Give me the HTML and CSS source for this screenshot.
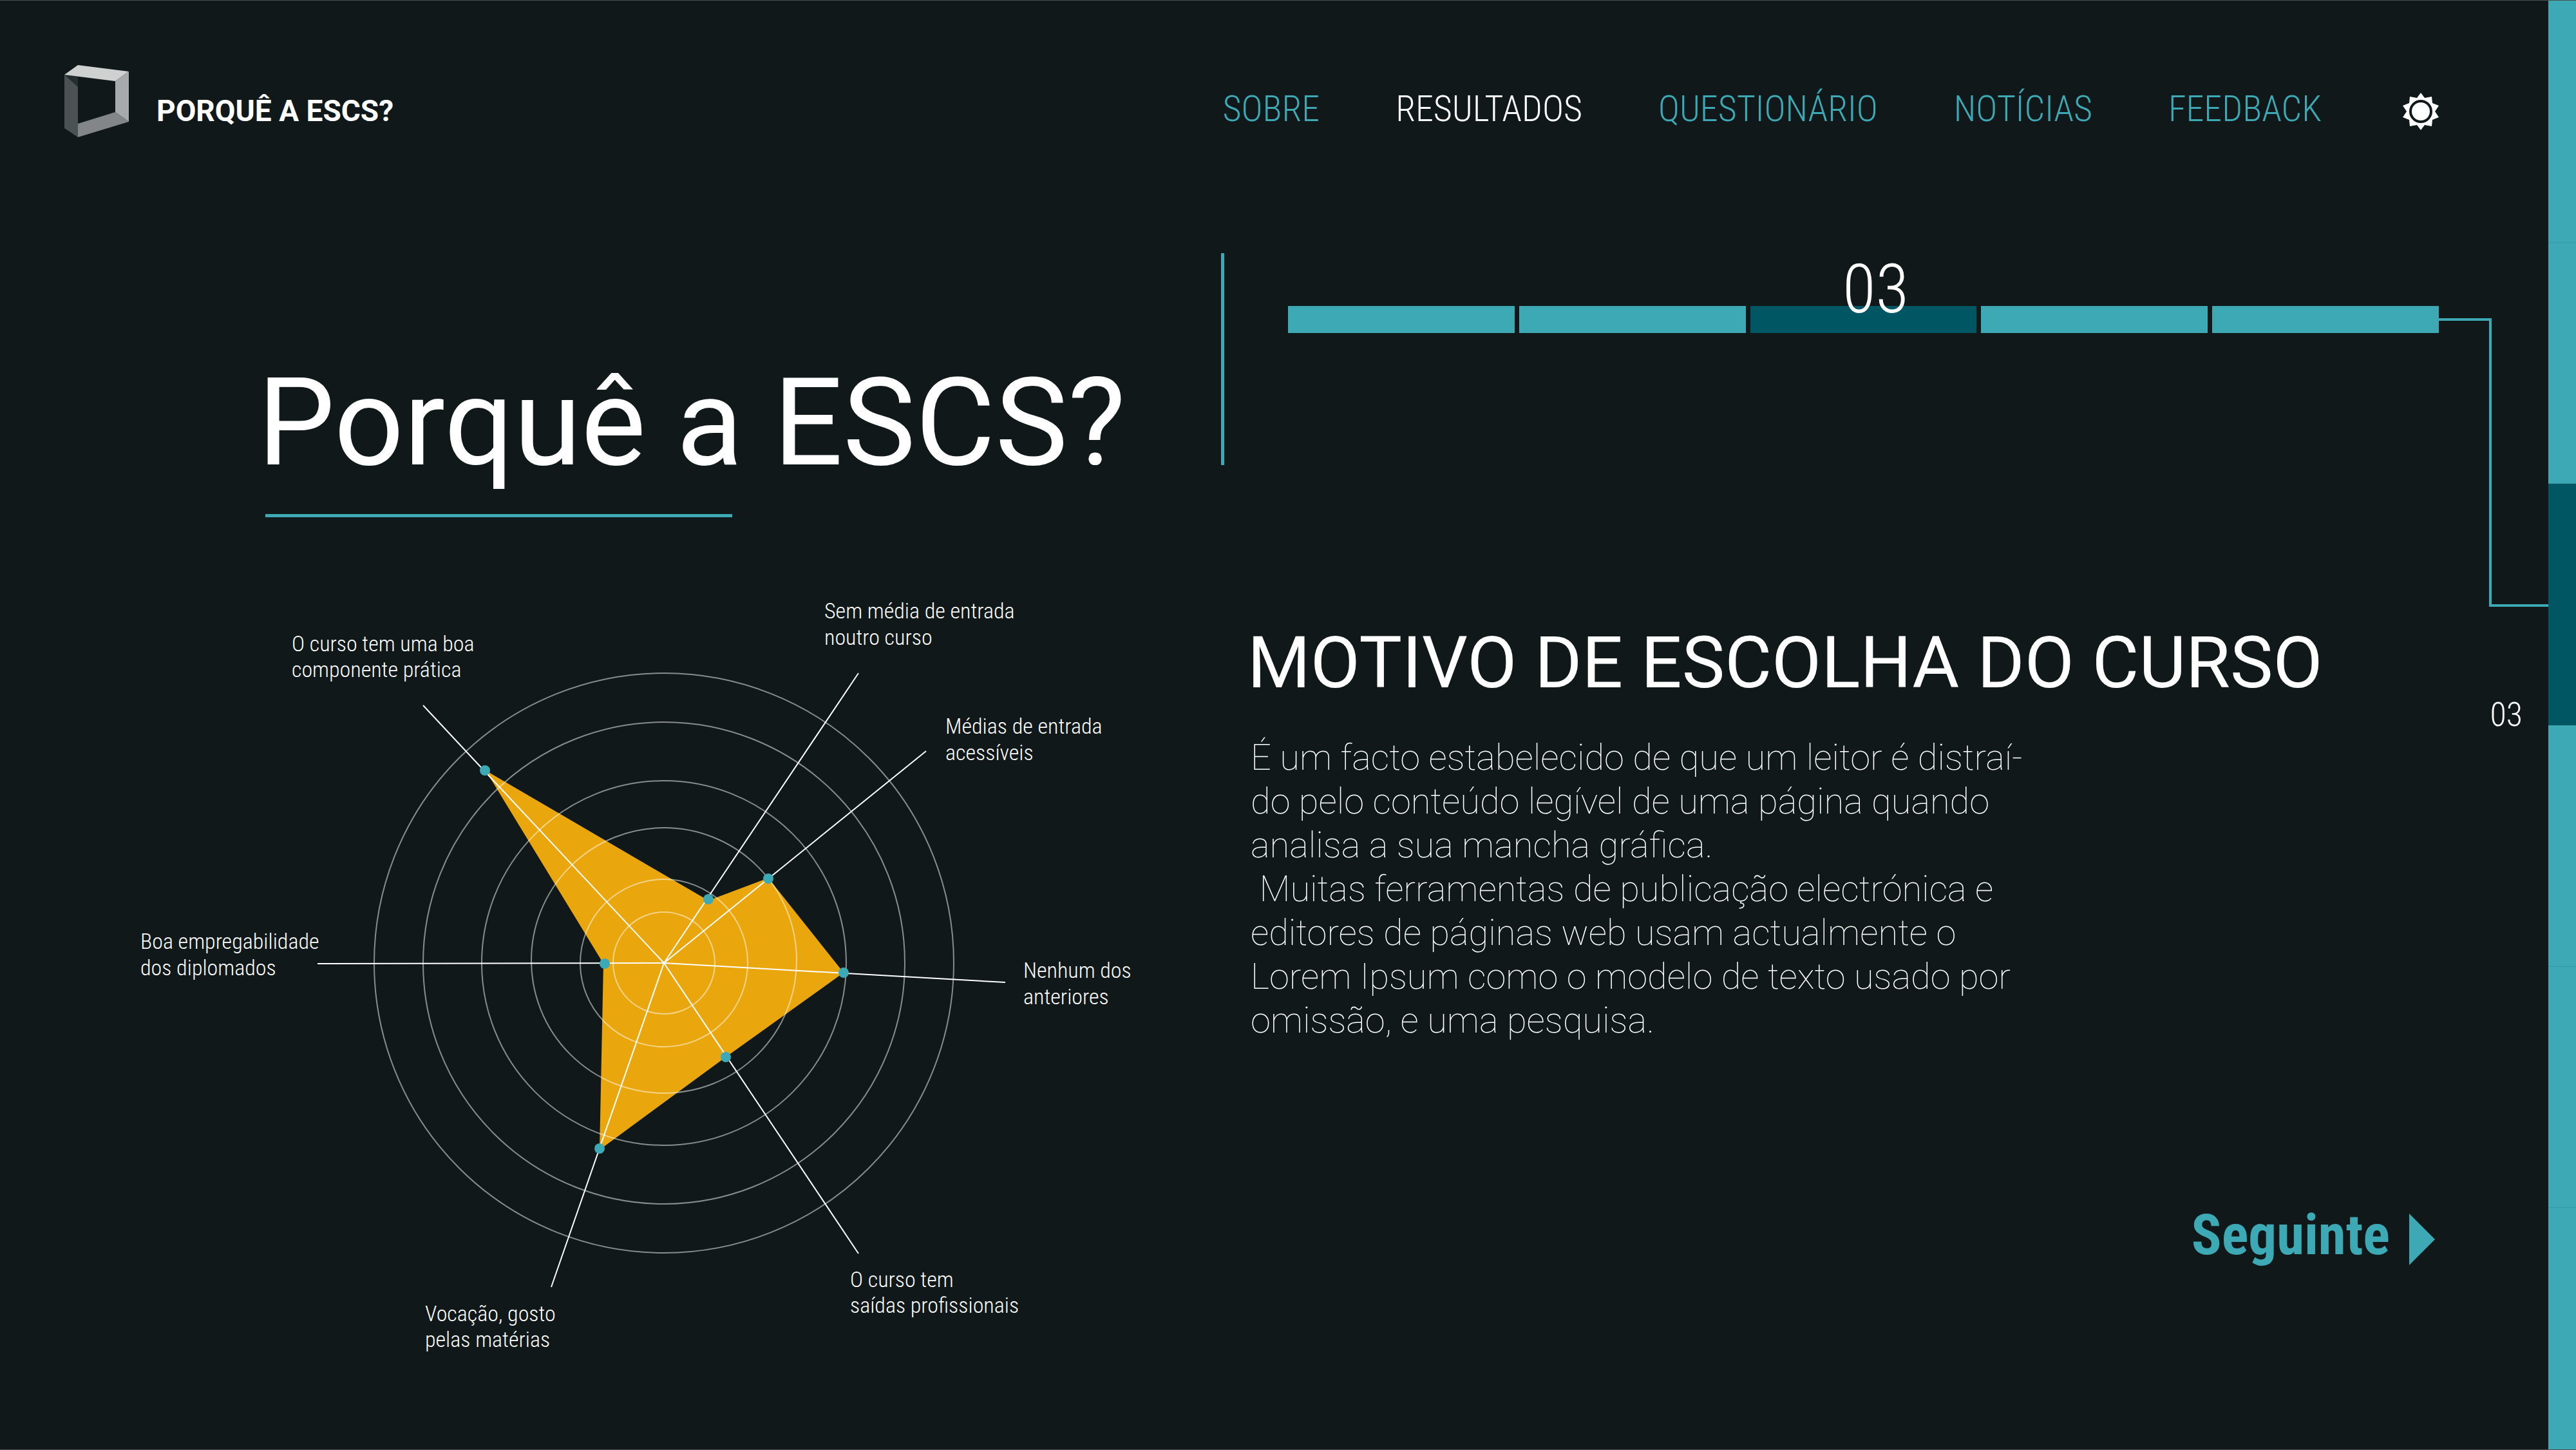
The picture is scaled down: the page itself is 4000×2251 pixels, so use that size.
FILE: index.html
```html
<!DOCTYPE html>
<html lang="pt">
<head>
<meta charset="utf-8">
<meta name="viewport" content="width=device-width, initial-scale=1">
<title>Porquê a ESCS?</title>
<link rel="stylesheet" href="styles.css">
</head>
<body>
<div class="page">
  <div class="body">
    <header class="header">
      <a class="brand" href="#">
        <svg class="brand-logo" viewBox="0 0 100 112" aria-hidden="true">
          <path fill="#262f30" d="M0 15L21 18V34Z"/>
          <path fill="#4c5252" d="M0 15L21 34V112L0 98Z"/>
          <path fill="#cfd1d1" d="M21 0L100 10L79 25L0 15Z"/>
          <path fill="#a7aaab" d="M100 10V88L79 73V25Z"/>
          <path fill="#838687" d="M21 91L79 73L100 88L21 112Z"/>
        </svg>
        <span class="brand-name">PORQUÊ A ESCS?</span>
      </a>
      <nav class="menu" aria-label="Principal">
        <a href="#sobre">SOBRE</a>
        <a class="active" href="#resultados" aria-current="page">RESULTADOS</a>
        <a href="#questionario">QUESTIONÁRIO</a>
        <a href="#noticias">NOTÍCIAS</a>
        <a href="#feedback">FEEDBACK</a>
        <button class="theme" type="button" aria-label="Mudar tema">
          <svg viewBox="-30 -30 60 60" aria-hidden="true">
            <path fill="#fff" d="M0-29L6-21L17-23L18-13L28-9L22 0L28 9L18 13L17 23L6 21L0 29L-6 21L-17 23L-18 13L-28 9L-22 0L-28-9L-18-13L-17-23L-6-21Z"/>
            <circle r="16" fill="#fff" stroke="#101819" stroke-width="4"/>
          </svg>
        </button>
      </nav>
    </header>

    <main class="content">
      <section class="overview">
        <h1>Porquê a ESCS?</h1>
        <hr class="rule">
        <svg class="radar" viewBox="200 900 1696 1230" role="img" aria-label="Motivo de escolha do curso">
          <polygon class="area" points="754,1196 1100,1398 1193,1363 1310,1510 1127,1641 931,1785 937,1496"/>
          <g class="rings">
            <circle cx="1031" cy="1495" r="79"/>
            <circle cx="1031" cy="1495" r="130"/>
            <circle cx="1031" cy="1491" r="206"/>
            <circle cx="1031" cy="1495" r="283"/>
            <circle cx="1031" cy="1495" r="374"/>
            <circle cx="1031" cy="1495" r="450"/>
          </g>
          <path class="axes" d="M1031 1495L657 1095M1031 1495L1333 1045M1031 1495L1438 1166M1031 1495L1561 1525M1031 1495L1333 1946M1031 1495L856 1998M1031 1495L493 1496"/>
          <g class="dots">
            <circle cx="753" cy="1196" r="8"/>
            <circle cx="1100" cy="1396" r="8"/>
            <circle cx="1193" cy="1364" r="8"/>
            <circle cx="1310" cy="1510" r="8"/>
            <circle cx="1127" cy="1641" r="8"/>
            <circle cx="931" cy="1783" r="8"/>
            <circle cx="939" cy="1496" r="8"/>
          </g>
          <g class="labels">
            <text y="1011"><tspan x="453">O curso tem uma boa</tspan><tspan x="453" dy="40">componente prática</tspan></text>
            <text y="960"><tspan x="1280">Sem média de entrada</tspan><tspan x="1280" dy="41">noutro curso</tspan></text>
            <text y="1139"><tspan x="1468">Médias de entrada</tspan><tspan x="1468" dy="41">acessíveis</tspan></text>
            <text y="1518"><tspan x="1589">Nenhum dos</tspan><tspan x="1589" dy="41">anteriores</tspan></text>
            <text y="1998"><tspan x="1320">O curso tem</tspan><tspan x="1320" dy="40">saídas profissionais</tspan></text>
            <text y="2051"><tspan x="660">Vocação, gosto</tspan><tspan x="660" dy="40">pelas matérias</tspan></text>
            <text y="1473"><tspan x="218">Boa empregabilidade</tspan><tspan x="218" dy="41">dos diplomados</tspan></text>
          </g>
        </svg>
      </section>

      <section class="detail">
        <div class="progress">
          <div class="divider"></div>
          <ol class="steps">
            <li></li>
            <li></li>
            <li class="current"><span>03</span></li>
            <li></li>
            <li></li>
          </ol>
          <div class="connector"><i class="down"></i><i class="out"></i></div>
        </div>
        <h2>MOTIVO DE ESCOLHA DO CURSO</h2>
        <p>É um facto estabelecido de que um leitor é distraí-<br>do pelo conteúdo legível de uma página quando<br>analisa a sua mancha gráfica.<br>&nbsp;Muitas ferramentas de publicação electrónica e<br>editores de páginas web usam actualmente o<br>Lorem Ipsum como o modelo de texto usado por<br>omissão, e uma pesquisa.</p>
        <a class="next" href="#seguinte">Seguinte
          <svg viewBox="0 0 40 80" aria-hidden="true"><path fill="currentColor" d="M0 0L40 40L0 80Z"/></svg>
        </a>
      </section>
    </main>
  </div>

  <ol class="rail">
    <li></li>
    <li></li>
    <li class="current"><span>03</span></li>
    <li></li>
    <li></li>
    <li></li>
  </ol>
</div>
</body>
</html>
```

FILE: styles.css
```css
:root {
  --bg: #101819;
  --teal: #3ca9b5;
  --deep: #015664;
  --condensed: "Roboto Condensed", Roboto, sans-serif;
}

* { box-sizing: border-box; }

body {
  margin: 0;
  background: var(--bg);
  color: #fff;
  font-family: Roboto, sans-serif;
}

a { color: inherit; text-decoration: none; }

.page {
  display: grid;
  grid-template-columns: minmax(0, 1fr) 43px;
  min-height: 100vh;
  border-top: 1px solid #4b5152;
  border-bottom: 1px solid #4b5152;
}

/* Header */
.header {
  display: flex;
  justify-content: space-between;
  align-items: center;
  padding: 100px 168px 0 100px;
}

.brand {
  display: flex;
  align-items: center;
  gap: 43px;
}

.brand-logo { width: 100px; height: 112px; }

.brand-name {
  padding-top: 30px;
  font: 700 46px/54px Roboto, sans-serif;
}

.menu {
  display: flex;
  align-items: center;
  gap: 118px;
  padding-top: 24px;
  color: var(--teal);
  font: 300 56px/66px var(--condensed);
}

.menu .active { color: #fff; }

.theme {
  width: 60px;
  height: 60px;
  margin: 8px 0 0 6px;
  padding: 0;
  border: 0;
  background: none;
}

.theme svg { display: block; width: 100%; }

/* Two columns under the header */
.content {
  display: grid;
  grid-template-columns: 1896fr 2061fr;
  padding-top: 180px;
}

.overview { padding: 153px 0 0 200px; }

h1 {
  margin: 0 0 0 200px;
  font-size: 190px;
  font-weight: 400;
  line-height: 220px;
}

.rule {
  width: 725px;
  height: 5px;
  margin: 32px 0 97px 212px;
  border: 0;
  background: var(--teal);
}

.radar { display: block; width: 100%; }
.area { fill: #e9a60d; }
.rings { fill: none; stroke: #fff; stroke-opacity: .5; stroke-width: 2; }
.axes { fill: none; stroke: #fff; stroke-width: 2; }
.dots { fill: var(--teal); }
.labels { fill: #fff; font: 300 34px var(--condensed); }

/* Right column */
.detail { display: flex; flex-direction: column; }

.progress {
  display: grid;
  grid-template-columns: 5px minmax(0, 1fr) 170px;
  height: 549px;
}

.divider { height: 329px; background: var(--teal); }

.steps {
  display: grid;
  grid-template-columns: repeat(5, 1fr);
  gap: 7px;
  height: 42px;
  margin: 82px 0 0 99px;
  padding: 0;
  list-style: none;
}

.steps li { position: relative; background: var(--teal); }
.steps .current { background: var(--deep); }

.steps span {
  position: absolute;
  right: 0;
  bottom: 6px;
  left: 38px;
  font: 300 106px/124px var(--condensed);
  text-align: center;
}

.connector { display: flex; margin-top: 101px; }
.down { width: 82px; border: solid var(--teal); border-width: 4px 4px 0 0; }
.out { flex: 1; margin-left: -4px; border-bottom: 4px solid var(--teal); }

h2 {
  margin: 21px 0 0 41px;
  font-size: 112px;
  font-weight: 400;
  line-height: 132px;
}

p {
  margin: 47px 0 0 46px;
  font-size: 56px;
  font-weight: 100;
  line-height: 68px;
}

.next {
  display: flex;
  align-items: center;
  align-self: flex-end;
  gap: 30px;
  margin: 248px 176px 0 0;
  color: var(--teal);
  font: 700 87px/102px var(--condensed);
}

.next svg { width: 40px; height: 80px; margin-top: 14px; }

/* Section rail along the right edge */
.rail {
  display: grid;
  grid-template-rows: repeat(6, 1fr);
  margin: 0;
  padding: 1px 0 0;
  background: var(--teal);
  list-style: none;
}

.rail li { position: relative; border-bottom: 1px solid #3599a4; }
.rail .current { border-color: var(--deep); background: var(--deep); }
.rail li:last-child { border-bottom: 0; }

.rail span {
  position: absolute;
  right: 83px;
  bottom: -15px;
  font: 300 52px/61px var(--condensed);
}
```
